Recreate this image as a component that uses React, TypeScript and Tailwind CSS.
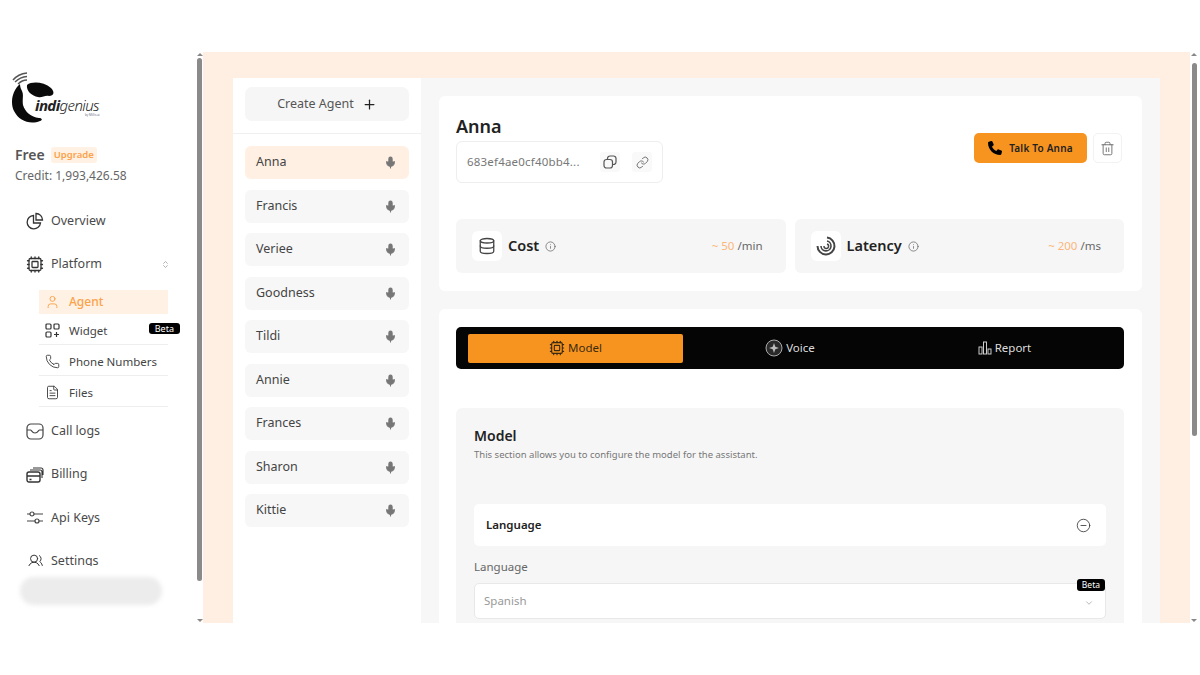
import { ChevronDown, ChevronsUpDown, CircleMinus, Cpu, Database, FileText, Info, Link, Mic, Phone, Plus, Trash2, User, UsersRound } from 'lucide-react';
import { FaPhone } from 'react-icons/fa6';

const agents = ['Anna', 'Francis', 'Veriee', 'Goodness', 'Tildi', 'Annie', 'Frances', 'Sharon', 'Kittie'];

function Logo() {
  return (
    <div className="relative h-[52px] w-[100px]">
      <svg className="absolute left-0 top-0" width="44" height="54" viewBox="0 0 44 54">
        <path d="M1 9 Q6 3 15 2 M3 11 Q8 6 15 5.500 M6 13 Q10 9 15 9" fill="none" stroke="#555" strokeWidth="1.400" />
        <path d="M15 14 C20 10 32 11 39 17 C43 21 42 25 37 25 C33 24 30 27 26 26 C20 25 14 20 15 14Z" fill="#0a0a0a" />
        <path d="M8 13 C0 20 -2 32 2 40 C7 50 18 54 28 50 C31 49 30 47 27 47 C19 46 13 41 11 34 C10 28 12 24 10 20 C9 18 8 16 8 13Z" fill="#0a0a0a" />
      </svg>
      <span className="absolute left-[23px] top-[27px] text-[15px] italic leading-[14px] tracking-[-0.6px] text-[#222]">
        <b>indi</b><span className="font-light">genius</span>
      </span>
      <span className="absolute left-[73px] top-[42px] text-[3px] leading-[4px] text-gray-500">by Millis.ai</span>
    </div>
  );
}

function PieIcon() {
  return (
    <svg width="18" height="18" viewBox="0 0 18 18" fill="none" stroke="#333" strokeWidth="1.300">
      <path d="M7.500 3.500a6.700 6.700 0 1 0 7 7.500H7.500Z" />
      <path d="M10 1.500a6.500 6.500 0 0 1 6.500 6.500H10Z" />
    </svg>
  );
}

function WidgetIcon() {
  return (
    <svg width="15" height="15" viewBox="0 0 15 15" fill="none" stroke="#333" strokeWidth="1.200">
      <rect x="1" y="1" width="5" height="5" rx="1" />
      <rect x="9" y="1" width="5" height="5" rx="1" />
      <rect x="1" y="9" width="5" height="5" rx="1" />
      <path d="M11.500 9v5M9 11.500h5" />
    </svg>
  );
}

function TrayIcon() {
  return (
    <svg width="18" height="17" viewBox="0 0 18 17" fill="none" stroke="#444" strokeWidth="1.200">
      <rect x="1" y="1" width="16" height="15" rx="4" />
      <path d="M1 7h3.500c1 0 1.500 3 4.500 3s3.500-3 4.500-3H17" />
    </svg>
  );
}

function CardsIcon() {
  return (
    <svg width="18" height="16" viewBox="0 0 18 16" fill="none" stroke="#333" strokeWidth="1.400">
      <rect x="1" y="5" width="13" height="10" rx="2" />
      <path d="M1 9h13M3.500 12.500h2" />
      <path d="M4 3h10a2 2 0 0 1 2 2v6M7 1h8a2 2 0 0 1 2 2v5" strokeWidth="1.100" />
    </svg>
  );
}

function SlidersIcon() {
  return (
    <svg width="18" height="16" viewBox="0 0 18 16" fill="none" stroke="#444" strokeWidth="1.200">
      <circle cx="6" cy="4" r="2" />
      <circle cx="11" cy="11" r="2" />
      <path d="M1 4h3M8 4h9M1 11h8M13 11h4" />
    </svg>
  );
}

function CopyIcon() {
  return (
    <svg width="14" height="14" viewBox="0 0 14 14" fill="none" stroke="#555" strokeWidth="1.200">
      <rect x="1" y="4.500" width="8.500" height="8.500" rx="2.500" />
      <path d="M4.500 4.500V3.500A2.500 2.500 0 0 1 7 1h3.500A2.500 2.500 0 0 1 13 3.500V7a2.500 2.500 0 0 1-2.500 2.500h-1" />
    </svg>
  );
}

function NavItem({ icon, label }: { icon: React.ReactNode; label: string }) {
  return (
    <div className="flex h-[20px] items-center gap-[7px] pl-[26px] text-[12.500px] text-[#4a4a4a]">
      <span className="flex w-[18px] justify-center text-[#333]">{icon}</span>
      {label}
    </div>
  );
}

function SubItem({ icon, label, children }: { icon: React.ReactNode; label: string; children?: React.ReactNode }) {
  return (
    <div className="relative flex h-[31px] w-[129px] items-center gap-[9px] border-b border-[#eeeeee] pl-[6px] pt-[3px] text-[11.500px] text-[#444]">
      <span className="flex w-[15px] justify-center text-[#333]">{icon}</span>
      {label}
      {children}
    </div>
  );
}

function Sidebar() {
  return (
    <aside className="flex h-full w-[196px] shrink-0 flex-col bg-white">
      <div className="pl-[12px] pt-[19px]">
        <Logo />
      </div>
      <div className="mt-[21px] pl-[15px]">
        <div className="flex items-center gap-[6px]">
          <span className="text-[14px] font-semibold text-[#555]">Free</span>
          <span className="rounded-[3px] bg-[#fff1e4] px-[3px] py-[2px] text-[9.500px] font-semibold leading-3 text-[#fba24a]">Upgrade</span>
        </div>
        <div className="mt-[3px] text-[12px] leading-4 text-[#666]">Credit: 1,993,426.58</div>
      </div>
      <nav className="mt-[27px] flex-1 overflow-hidden">
        <NavItem icon={<PieIcon />} label="Overview" />
        <div className="mt-[23px] flex items-center pr-[26px]">
          <div className="flex-1"><NavItem icon={<Cpu size={19} strokeWidth={1.700} />} label="Platform" /></div>
          <ChevronsUpDown size={9} className="text-[#999]" />
        </div>
        <div className="mt-[16px] pl-[39px]">
          <div className="flex h-[24px] w-[129px] items-center gap-[9px] bg-[#fff1e4] pl-[6px] text-[12px] font-medium text-[#fba24a]">
            <span className="flex w-[15px] justify-center"><User size={16} strokeWidth={1.500} /></span>
            Agent
          </div>
          <SubItem icon={<WidgetIcon />} label="Widget">
            <span className="absolute -right-[12px] top-[9px] rounded-[3px] bg-black px-[6px] text-[9px] leading-[11px] text-white">Beta</span>
          </SubItem>
          <SubItem icon={<Phone size={15} strokeWidth={1.400} />} label="Phone Numbers" />
          <SubItem icon={<FileText size={15} strokeWidth={1.400} />} label="Files" />
        </div>
        <div className="mt-[14px] flex flex-col gap-[23.500px]">
          <NavItem icon={<TrayIcon />} label="Call logs" />
          <NavItem icon={<CardsIcon />} label="Billing" />
          <NavItem icon={<SlidersIcon />} label="Api Keys" />
          <NavItem icon={<UsersRound size={17} strokeWidth={1.400} />} label="Settings" />
        </div>
      </nav>
      <div className="h-[57px] pl-[20px] pt-[11px]">
        <div className="h-[28px] w-[142px] rounded-full bg-[#ececec] blur-[2px]" />
      </div>
    </aside>
  );
}

function Scrollbar({ thumbTop, thumbHeight, width }: { thumbTop: string; thumbHeight: string; width: string }) {
  return (
    <div className={`flex h-full shrink-0 flex-col items-center bg-white ${width}`}>
      <div className="mt-[1px] h-0 w-0 border-x-[3px] border-b-[3px] border-x-transparent border-b-[#888]" />
      <div className={`w-[5px] rounded-full bg-[#8a8a8a] ${thumbTop} ${thumbHeight}`} />
      <div className="mb-[1px] mt-auto h-0 w-0 border-x-[3px] border-t-[3px] border-x-transparent border-t-[#888]" />
    </div>
  );
}

function AgentList() {
  return (
    <div className="h-full w-[188px] shrink-0 bg-white">
      <div className="border-b border-[#f0f0f0] px-[12px] pb-[12px] pt-[9px]">
        <div className="flex h-[34px] items-center justify-center gap-[8px] rounded-[7px] bg-[#f6f6f6] text-[12.500px] text-[#555]">
          Create Agent <Plus size={15} className="text-[#222]" />
        </div>
      </div>
      <div className="flex flex-col gap-[10.500px] px-[12px] pt-[12px]">
        {agents.map((name, i) => (
          <div key={name} className={`flex h-[33px] items-center justify-between rounded-[6px] pl-[11px] pr-[12px] text-[12.500px] text-[#444] ${i === 0 ? 'bg-[#fff0e3]' : 'bg-[#f7f7f7]'}`}>
            {name}
            <Mic size={13} strokeWidth={2} fill="currentColor" className="text-[#777]" />
          </div>
        ))}
      </div>
    </div>
  );
}

function StatCard({ icon, label, value, unit }: { icon: React.ReactNode; label: string; value: string; unit: string }) {
  return (
    <div className="flex h-[54px] flex-1 items-center rounded-[6px] bg-[#f6f6f6] pl-[16px] pr-[23px]">
      <span className="flex h-[30px] w-[30px] items-center justify-center rounded-[6px] bg-white text-[#444]">{icon}</span>
      <span className="ml-[6px] text-[14.500px] font-semibold text-[#222]">{label}</span>
      <Info size={11} strokeWidth={1.600} className="ml-[6px] text-[#666]" />
      <span className="ml-auto text-[11.500px] text-[#fbb67a]">~ {value} <span className="text-[#666]">{unit}</span></span>
    </div>
  );
}

function LatencyIcon() {
  return (
    <svg width="20" height="20" viewBox="0 0 20 20" fill="none" stroke="#444">
      <path d="M11 1.500a8.500 8.500 0 1 1-9.500 8.500" strokeWidth="2" />
      <path d="M11 5a5 5 0 1 1-6 5" strokeWidth="1.600" />
      <path d="M11 8a2.300 2.300 0 1 1-3 2" strokeWidth="1.400" />
    </svg>
  );
}

function VoiceIcon() {
  return (
    <svg width="18" height="18" viewBox="0 0 18 18" fill="none">
      <circle cx="9" cy="9" r="8" stroke="#aaa" strokeWidth="1" fill="#2a2a2a" />
      <path d="M9 4 10.300 7.700 14 9 10.300 10.300 9 14 7.700 10.300 4 9 7.700 7.700Z" fill="#bbb" />
    </svg>
  );
}

function ReportIcon() {
  return (
    <svg width="14" height="14" viewBox="0 0 14 14" fill="none" stroke="#ccc" strokeWidth="1">
      <rect x="1" y="6" width="3" height="7" />
      <rect x="5.500" y="1" width="3" height="12" />
      <rect x="10" y="8" width="3" height="5" />
    </svg>
  );
}

function TopCard() {
  return (
    <section className="h-[195px] rounded-[6px] bg-white pl-[17px] pr-[18px] pt-[20px]">
      <div className="flex items-start justify-between">
        <div>
          <h1 className="text-[18px] font-semibold leading-5 text-[#222]">Anna</h1>
          <div className="mt-[5px] flex h-[42px] w-[207px] items-center rounded-[6px] border border-[#eeeeee] pl-[10px] pr-[10px]">
            <span className="text-[11.500px] tracking-[0.2px] text-[#777]">683ef4ae0cf40bb4...</span>
            <span className="ml-auto flex h-[20px] w-[20px] items-center justify-center rounded-[3px] bg-[#f9f9f9]"><CopyIcon /></span>
            <span className="ml-[12px] flex h-[20px] w-[20px] items-center justify-center rounded-[3px] bg-[#f9f9f9]"><Link size={13} strokeWidth={1.500} className="text-[#555]" /></span>
          </div>
        </div>
        <div className="mr-[2px] mt-[17px] flex items-center gap-[6px]">
          <div className="flex h-[30px] w-[113px] items-center justify-center gap-[7px] rounded-[5px] bg-[#f79420] text-[10px] font-semibold tracking-[0.2px] text-[#222]">
            <FaPhone size={14} className="text-black" /> Talk To Anna
          </div>
          <div className="flex h-[30px] w-[29px] items-center justify-center rounded-[5px] border border-[#f2f2f2]">
            <Trash2 size={15} strokeWidth={1.400} className="text-[#666]" />
          </div>
        </div>
      </div>
      <div className="mt-[36px] flex gap-[9px]">
        <StatCard icon={<Database size={18} strokeWidth={1.700} />} label="Cost" value="50" unit="/min" />
        <StatCard icon={<LatencyIcon />} label="Latency" value="200" unit="/ms" />
      </div>
    </section>
  );
}

function ModelCard() {
  return (
    <section className="mt-[18px] flex-1 overflow-hidden rounded-t-[6px] bg-white pl-[17px] pr-[18px] pt-[18px]">
      <div className="flex h-[42px] items-center rounded-[5px] bg-[#050505] px-[12px] text-[11.500px]">
        <div className="flex h-[29px] w-[215px] items-center justify-center gap-[3px] rounded-[2px] bg-[#f79420] text-[#3a2a10]">
          <Cpu size={16} strokeWidth={1.700} /> Model
        </div>
        <div className="flex flex-1 items-center justify-center gap-[3px] text-[#ddd]"><VoiceIcon /> Voice</div>
        <div className="flex w-[215px] items-center justify-center gap-[3px] text-[#ddd]"><ReportIcon /> Report</div>
      </div>
      <div className="mt-[39px] h-[300px] rounded-[6px] bg-[#f6f6f6] px-[18px] pt-[19px]">
        <h2 className="text-[14px] font-semibold leading-[18px] text-[#222]">Model</h2>
        <p className="mt-[2px] text-[9.500px] leading-[16px] text-[#777]">This section allows you to configure the model for the assistant.</p>
        <div className="mt-[41px] flex h-[42px] items-center justify-between rounded-[5px] bg-white pl-[12px] pr-[15px]">
          <span className="text-[11.500px] font-semibold text-[#222]">Language</span>
          <CircleMinus size={15} strokeWidth={1.300} className="text-[#333]" />
        </div>
        <div className="mt-[12px] text-[11.500px] leading-[18px] text-[#666]">Language</div>
        <div className="relative mt-[7px] flex h-[36px] items-center justify-between rounded-[5px] border border-[#e8e8e8] bg-white pl-[9px] pr-[11px]">
          <span className="text-[11.500px] text-[#999]">Spanish</span>
          <ChevronDown size={10} className="mt-[3px] text-[#aaa]" />
          <span className="absolute -top-[5px] right-0 rounded-[3px] bg-black px-[5px] text-[8.500px] leading-[12px] text-white">Beta</span>
        </div>
      </div>
    </section>
  );
}

export default function App() {
  return (
    <div className="h-[675px] w-[1200px] overflow-hidden bg-white pt-[52px] font-['Noto_Sans',sans-serif]">
      <div className="flex h-[571px]">
        <Sidebar />
        <Scrollbar thumbTop="mt-[2px]" thumbHeight="h-[523px]" width="w-[7px]" />
        <div className="h-full w-[987px] shrink-0 bg-[#ffefe2] px-[30px] pt-[26px]">
          <div className="flex h-[545px] overflow-hidden bg-[#f7f7f7]">
            <AgentList />
            <main className="flex flex-1 flex-col px-[18px] pt-[18px]">
              <TopCard />
              <ModelCard />
            </main>
          </div>
        </div>
        <Scrollbar thumbTop="mt-[7px]" thumbHeight="h-[373px]" width="w-[8px]" />
      </div>
    </div>
  );
}
